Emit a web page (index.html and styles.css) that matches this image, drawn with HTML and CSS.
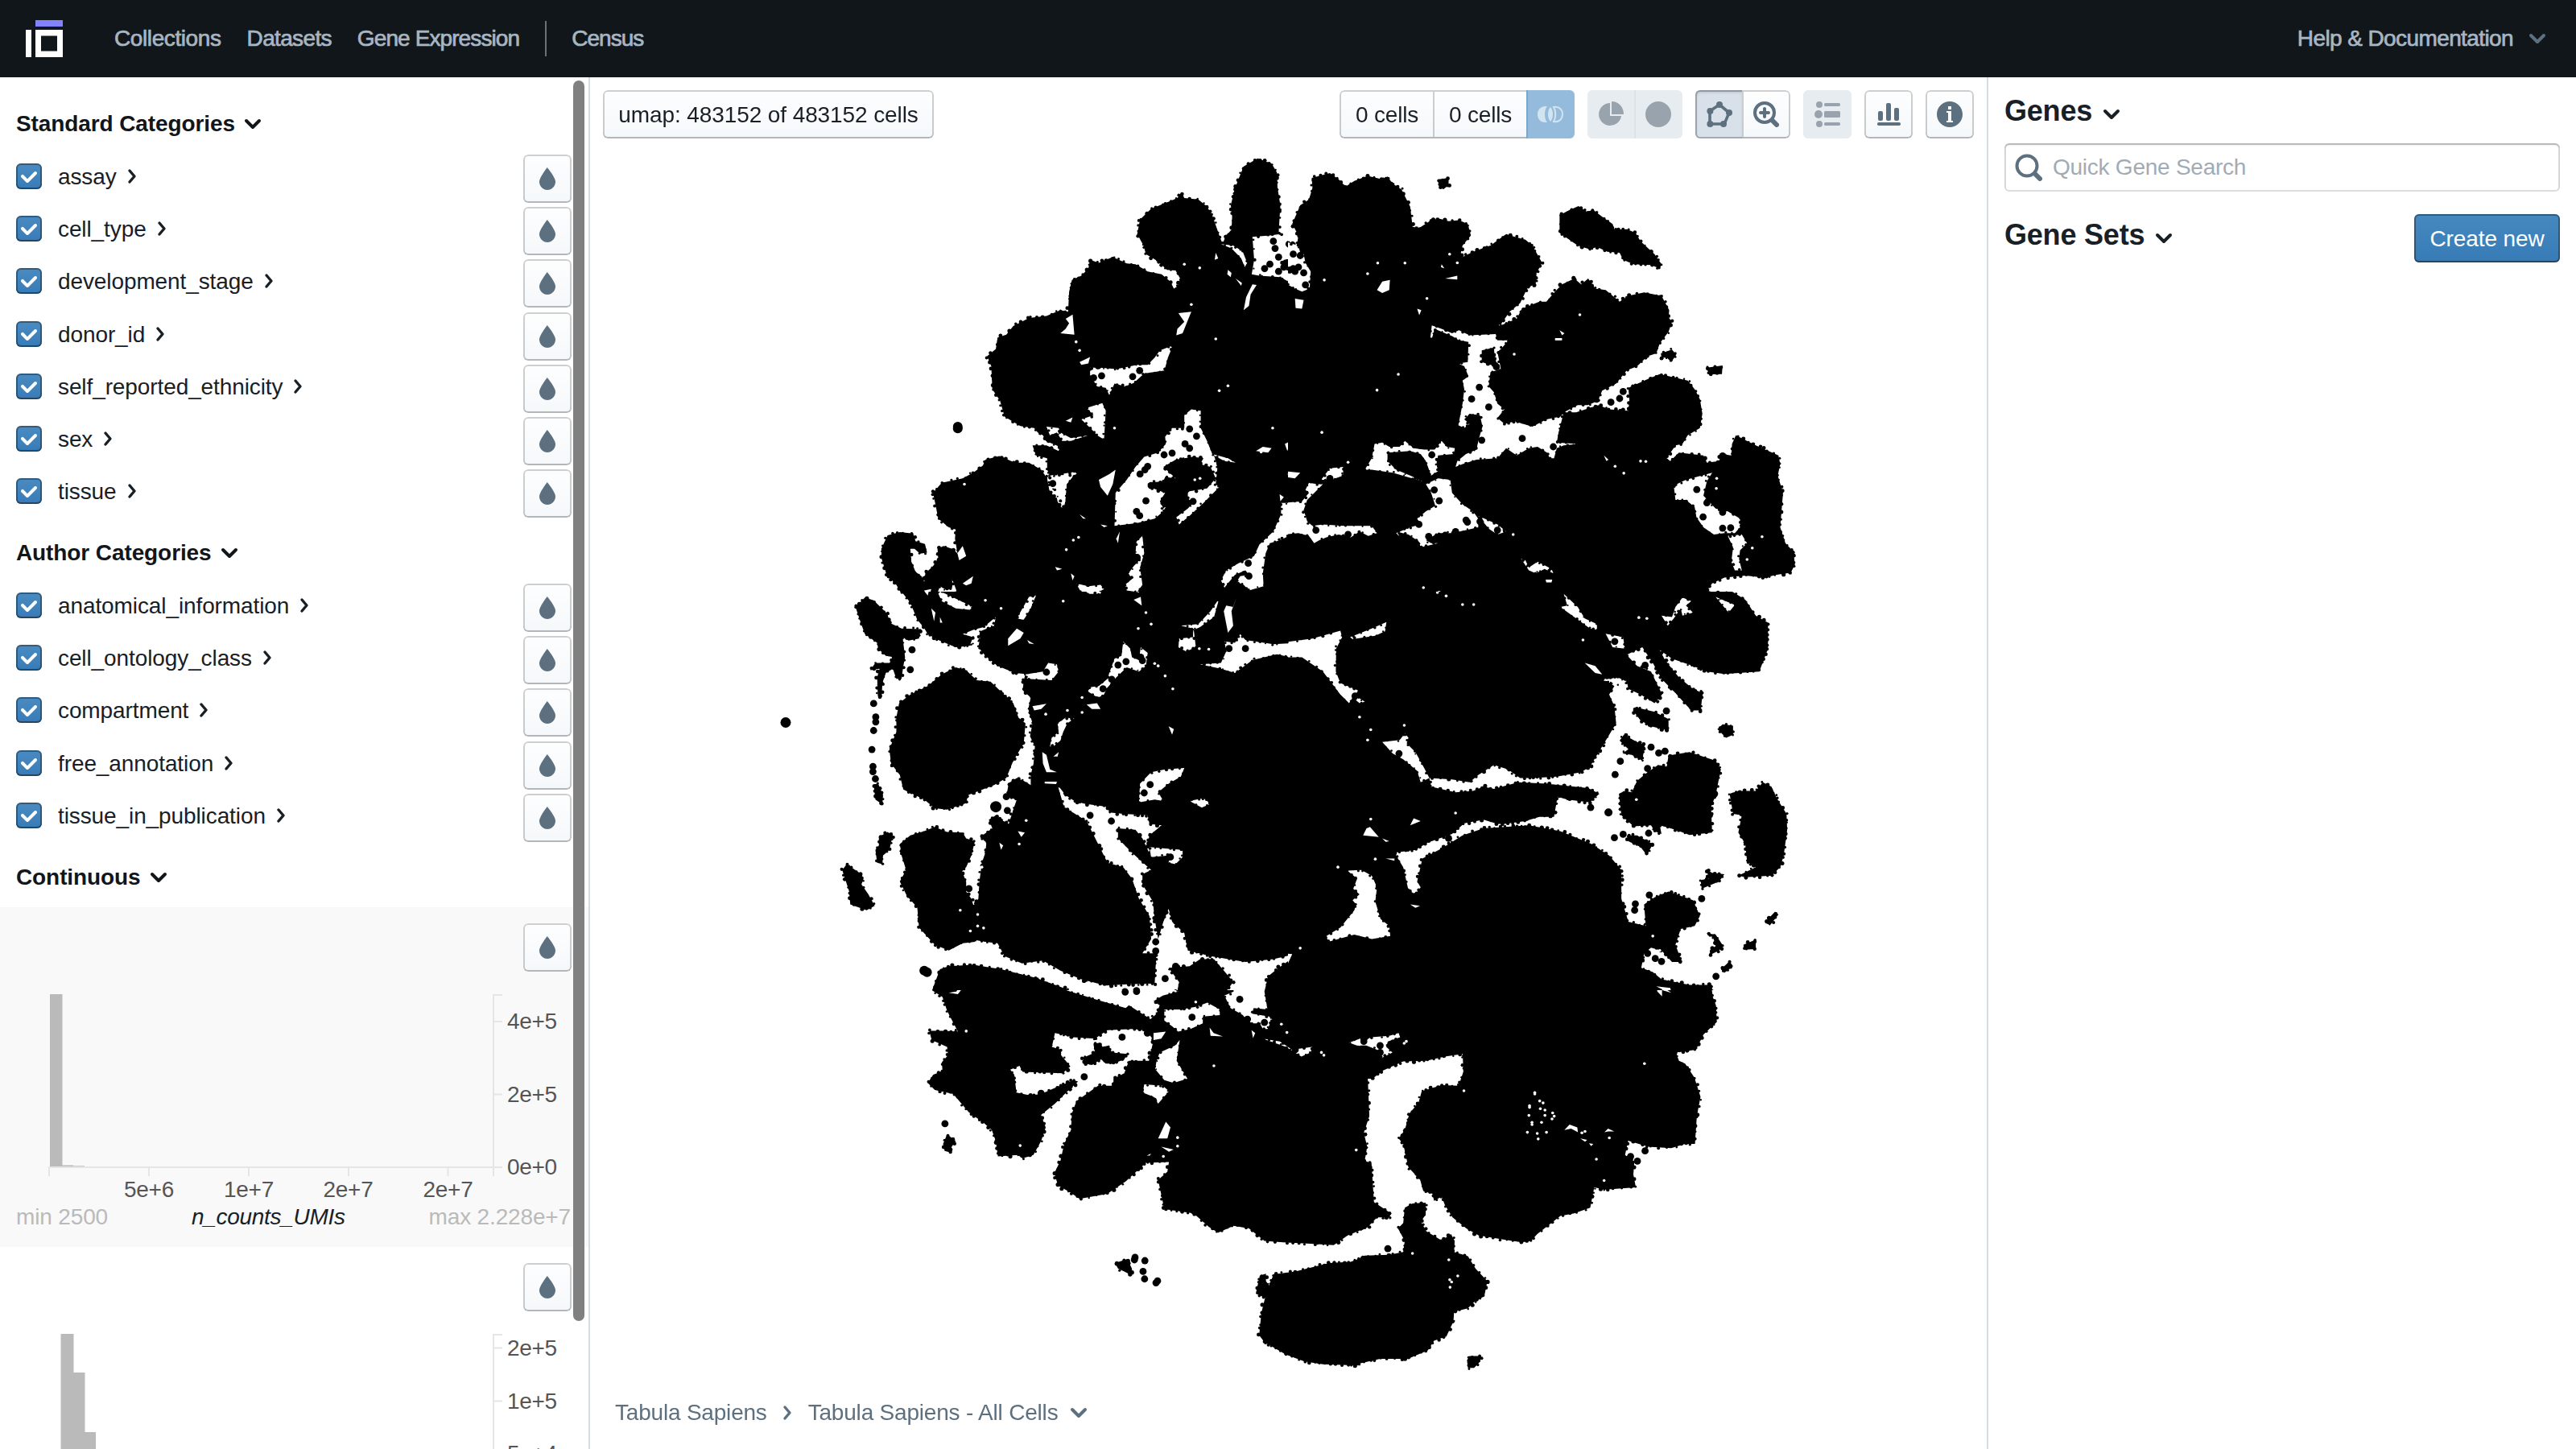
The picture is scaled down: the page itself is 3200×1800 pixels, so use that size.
FILE: index.html
```html
<!DOCTYPE html>
<html lang="en">
<head>
<meta charset="utf-8">
<title>Tabula Sapiens - All Cells</title>
<link rel="stylesheet" href="styles.css">
</head>
<body>
<svg class="defs" aria-hidden="true">
  <symbol id="tint" viewBox="0 0 16 16"><path d="M7.88 1s-4.9 6.28-4.9 8.9c.01 2.82 2.34 5.1 4.99 5.1 2.65-.01 5.03-2.3 5.03-5.13C12.99 7.17 7.88 1 7.88 1z"/></symbol>
  <symbol id="tick" viewBox="0 0 16 16"><path d="M12 5c-.28 0-.53.11-.71.29L7 9.59l-2.29-2.3a1.003 1.003 0 00-1.42 1.42l3 3c.18.18.43.29.71.29s.53-.11.71-.29l5-5A1.003 1.003 0 0012 5z"/></symbol>
  <symbol id="down" viewBox="0 0 22 14"><path d="M3 3l8 8 8-8" fill="none" stroke="currentColor" stroke-width="4" stroke-linecap="round" stroke-linejoin="round"/></symbol>
  <symbol id="right" viewBox="0 0 14 20"><path d="M4 3l6 7-6 7" fill="none" stroke="currentColor" stroke-width="3.4" stroke-linecap="round" stroke-linejoin="round"/></symbol>
</svg>

<header class="topbar">
  <svg class="logo" width="46" height="46" viewBox="0 0 46 46"><path fill="#8282ff" d="M12 0h34v8H12z"/><path fill="#fff" fill-rule="evenodd" d="M0 12h7v34H0zM12 12h34v34H12zM19 19.500v19h20v-19z"/></svg>
  <nav class="nav">
    <a class="collections">Collections</a><a class="datasets">Datasets</a><a class="expression">Gene Expression</a><span class="divider"></span><a class="census">Census</a>
  </nav>
  <div class="help">Help &amp; Documentation <svg width="22" height="14"><use href="#down"/></svg></div>
</header>

<div class="layout">
  <aside class="left">
    <div class="scroll">
      <h2 class="section">Standard Categories <svg width="22" height="14"><use href="#down"/></svg></h2>
      <div class="rows" data-names="assay cell_type development_stage donor_id self_reported_ethnicity sex tissue"></div>
      <h2 class="section">Author Categories <svg width="22" height="14"><use href="#down"/></svg></h2>
      <div class="rows" data-names="anatomical_information cell_ontology_class compartment free_annotation tissue_in_publication"></div>
      <h2 class="section last">Continuous <svg width="22" height="14"><use href="#down"/></svg></h2>

      <div class="hist shaded">
        <button class="btn icon"><svg width="32" height="32"><use href="#tint"/></svg></button>
        <svg class="plot" width="731" height="288" viewBox="0 0 731 288">
          <path class="bar" d="M62 242V28h15.500v212.500H91v.7h14v.8z"/>
          <path class="axis" d="M61 254V243H624M185 243v11M309 243v11M433 243v11M556.500 243v11M613 254V29h11M613 62h11M613 152.500h11"/>
          <g class="tick mid"><text x="185" y="280">5e+6</text><text x="309" y="280">1e+7</text><text x="432.500" y="280">2e+7</text><text x="556.500" y="280">2e+7</text></g>
          <g class="tick"><text x="630" y="71">4e+5</text><text x="630" y="161.500">2e+5</text><text x="630" y="252">0e+0</text></g>
        </svg>
        <div class="caption"><span>min 2500</span><em>n_counts_UMIs</em><span>max 2.228e+7</span></div>
      </div>

      <div class="hist">
        <button class="btn icon"><svg width="32" height="32"><use href="#tint"/></svg></button>
        <svg class="plot" width="731" height="288" viewBox="0 0 731 288">
          <path class="bar" d="M75.500 242V28H91.500v48H105.500v74H119v92z"/>
          <path class="axis" d="M61 254V243H624M613 254V29h11M613 45.500h11M613 111.500h11M613 177.500h11"/>
          <g class="tick"><text x="630" y="54.500">2e+5</text><text x="630" y="120.500">1e+5</text><text x="630" y="186">5e+4</text></g>
        </svg>
      </div>
    </div>
    <div class="thumb"></div>
  </aside>

  <main class="graph">
    <canvas id="embedding" class="embedding" width="1735" height="1704"></canvas>
    <div class="toolbar">
      <button class="btn layout-name">umap: 483152 of 483152 cells</button>
      <div class="tools">
        <div class="group">
          <button class="btn set">0 cells</button><button class="btn set">0 cells</button>
          <button class="btn icon compare"><svg width="32" height="32" viewBox="0 0 32 32"><path fill="#d3e4f1" d="M12 6C3 5 0 11 0 16s3 11 12 10C8 22 8 10 12 6z"/><path fill="#d3e4f1" d="M16 7c4 4 4 14 0 18-4-4-4-14 0-18z"/><path fill="none" stroke="#d3e4f1" stroke-width="2" d="M20 7c8-1 11 4 11 9s-3 10-11 9c3-5 3-13 0-18z"/></svg></button>
        </div>
        <div class="group">
          <button class="btn icon off"><svg width="32" height="32" viewBox="0 0 16 16"><path d="M7 1a7 7 0 1 0 7 8H7z"/><path d="M8 0v8h7.500C15.500 3.600 12.400 0 8 0z"/></svg></button>
          <button class="btn icon off split"><svg width="32" height="32" viewBox="0 0 16 16"><circle cx="8" cy="8" r="8"/></svg></button>
        </div>
        <div class="group">
          <button class="btn icon active"><svg width="32" height="32" viewBox="0 0 16 16"><path fill="none" stroke="currentColor" stroke-width="1.800" d="M8 2l6 5-3 7H2V6z"/><circle cx="8" cy="2" r="2"/><circle cx="14" cy="7" r="2"/><circle cx="10.500" cy="14" r="2"/><circle cx="2.200" cy="14" r="2"/><circle cx="2.200" cy="6" r="2"/></svg></button>
          <button class="btn icon"><svg width="32" height="32" viewBox="0 0 16 16"><circle cx="7" cy="7" r="6" fill="none" stroke="currentColor" stroke-width="2"/><path fill="none" stroke="currentColor" stroke-width="2" stroke-linecap="round" d="M7 4.500v5M4.500 7h5"/><path fill="none" stroke="currentColor" stroke-width="3" stroke-linecap="round" d="M12 12l2.500 2.500"/></svg></button>
        </div>
        <button class="btn icon off"><svg width="32" height="32" viewBox="0 0 16 16"><circle cx="3" cy="2" r="2"/><circle cx="2.500" cy="8" r="2.500"/><circle cx="3" cy="14" r="2"/><rect x="6" y="1" width="10" height="2" rx=".8"/><rect x="6" y="6" width="10" height="4" rx=".8"/><rect x="6" y="13" width="10" height="2" rx=".8"/></svg></button>
        <button class="btn icon"><svg width="32" height="32" viewBox="0 0 16 16"><rect x="1.500" y="6" width="3" height="6" rx="1"/><rect x="6.500" y="1" width="3" height="11" rx="1"/><rect x="11.500" y="4" width="3" height="8" rx="1"/><rect x="1" y="13" width="14.500" height="2" rx=".9"/></svg></button>
        <button class="btn icon"><svg width="32" height="32" viewBox="0 0 16 16"><path d="M8 0C3.580 0 0 3.580 0 8s3.580 8 8 8 8-3.580 8-8-3.580-8-8-8zM7 3h2v2H7V3zm3 10H6v-1h1V7H6V6h3v6h1v1z"/></svg></button>
      </div>
    </div>
    <div class="crumbs"><span>Tabula Sapiens</span><svg width="14" height="20" stroke-width="4"><use href="#right"/></svg><span>Tabula Sapiens - All Cells</span><svg width="22" height="14"><use href="#down"/></svg></div>
  </main>

  <aside class="genes">
    <h1>Genes <svg width="22" height="14"><use href="#down"/></svg></h1>
    <div class="search"><svg width="34" height="34" viewBox="0 0 34 34"><circle cx="15" cy="15" r="12.500" fill="none" stroke="#5c7080" stroke-width="4"/><path d="M25 25l6 6" stroke="#5c7080" stroke-width="6" stroke-linecap="round"/></svg><span>Quick Gene Search</span></div>
    <div class="sets"><h1>Gene Sets <svg width="22" height="14"><use href="#down"/></svg></h1><button class="btn primary">Create new</button></div>
  </aside>
</div>
<script src="app.js"></script>
</body>
</html>
```
FILE: styles.css
```css
* { box-sizing: border-box; }
body { margin: 0; width: 3200px; height: 1800px; overflow: hidden; background: #fff; color: #182026; font: 28px/36px "Liberation Sans", Arial, sans-serif; display: flex; flex-direction: column; }
svg { display: block; flex: none; fill: currentColor; }
.defs { position: absolute; width: 0; height: 0; }
h1, h2 { margin: 0; display: flex; align-items: center; }

.topbar { height: 96px; flex: none; background: #11161a; color: #a7b6c2; display: flex; align-items: center; padding: 0 37px 0 32px; }
.nav { display: flex; align-items: center; margin-left: 64px; }
.nav a, .help { -webkit-text-stroke: 0.7px #a7b6c2; white-space: nowrap; }
.nav a { margin-right: 32px; }
.nav .collections { letter-spacing: -0.4px; }
.nav .datasets { letter-spacing: -0.65px; }
.nav .expression { letter-spacing: -0.9px; }
.nav .census { letter-spacing: -0.95px; }
.nav .divider { width: 2px; height: 44px; background: #6b7178; margin-right: 31px; }
.help { margin-left: auto; display: flex; align-items: center; gap: 19px; letter-spacing: -0.6px; }
.help svg { color: #5c7080; }

.layout { flex: 1; min-height: 0; display: flex; }
.left { width: 733px; flex: none; border-right: 2px solid #d3dce3; position: relative; overflow: hidden; }
.scroll { padding-top: 19.500px; }
.section { height: 60px; margin: 8.400px 0 8.200px; padding: 1px 0 0 20px; font-size: 28px; line-height: 36px; letter-spacing: -0.1px; gap: 11px; color: #11161a; }
.section.last { margin-bottom: 7.400px; }
.row { height: 65.200px; display: flex; align-items: flex-start; padding: 0 21px 0 20px; }
.check { width: 32px; height: 32px; margin: 11px 20px 0 0; flex: none; border-radius: 6px; color: #fff; background: linear-gradient(#4a8bc1, #377bb7); box-shadow: inset 0 0 0 2px rgba(16,22,26,.4), inset 0 -2px 0 rgba(16,22,26,.2); }
.name { margin-top: 10px; letter-spacing: -0.1px; }
.row > svg { margin: 17px 0 0 12px; }
.row .btn { margin-left: auto; }

.btn { height: 60px; margin: 0; padding: 1px 20px 0; border: 0; border-radius: 6px; font: inherit; color: #182026; background: #f5f8fa linear-gradient(rgba(255,255,255,.85), rgba(255,255,255,0)); box-shadow: inset 0 0 0 2px rgba(16,22,26,.2), inset 0 -2px 0 rgba(16,22,26,.1); display: flex; align-items: center; justify-content: center; white-space: nowrap; }
.btn.icon { width: 60px; flex: none; padding: 0; color: #5c7080; }
.btn.layout-name { width: 411px; padding: 1px 0 0; letter-spacing: -0.1px; }

.hist { height: 422px; padding-top: 20px; display: flex; flex-direction: column; }
.hist .btn { align-self: flex-end; margin-right: 21px; }
.shaded { background: #f9f9f9; }
.bar { fill: #bababa; }
.axis { fill: none; stroke: #e5e5e5; stroke-width: 2; }
.tick { fill: #555; font-size: 28px; letter-spacing: -0.3px; }
.mid { text-anchor: middle; }
.caption { height: 34px; line-height: 34px; padding: 0 22px 0 20px; display: flex; justify-content: space-between; color: #bababa; letter-spacing: -0.15px; }
.caption em { color: #182026; letter-spacing: -0.3px; }
.thumb { position: absolute; left: 712px; top: 4px; width: 14px; height: 1541px; border-radius: 7px; background: #808080; }

.graph { flex: 1; position: relative; display: flex; flex-direction: column; justify-content: space-between; }
.embedding { position: absolute; inset: 0; }
.toolbar { position: relative; display: flex; justify-content: space-between; padding: 16px 16px 0; }
.tools { display: flex; gap: 16px; }
.group { display: flex; }
.group .btn:not(:first-child) { border-top-left-radius: 0; border-bottom-left-radius: 0; margin-left: -2px; }
.group .btn:not(:last-child) { border-top-right-radius: 0; border-bottom-right-radius: 0; }
.btn.set { width: 118px; padding: 1px 0 0; letter-spacing: -0.2px; }
.btn.compare { background: #94bbdc; box-shadow: inset 2px 0 0 #7aa8cc; }
.btn.off { background: #e6ecef; color: #98a3ae; box-shadow: none; }
.btn.split { box-shadow: inset 2px 0 0 #dce3e8; }
.btn.active { background: #d8e0e9; box-shadow: inset 0 0 0 2px rgba(16,22,26,.25), inset 0 2px 4px rgba(16,22,26,.2); }
.crumbs { position: relative; display: flex; align-items: center; padding: 0 0 27px 31px; color: #5c7080; letter-spacing: -0.2px; }
.crumbs svg:nth-child(2) { margin: 0 19px 0 18px; }
.crumbs svg:last-child { margin-left: 15px; }

.genes { width: 732px; flex: none; border-left: 2px solid #d3dce3; padding: 22px 20px; }
.genes h1 { font-size: 36px; line-height: 40px; height: 40px; gap: 13px; letter-spacing: -0.2px; }
.genes h1 svg { margin-top: 7px; }
.search { height: 60px; margin-top: 20px; padding-left: 13px; display: flex; align-items: center; gap: 13px; border-radius: 6px; color: #a1abb5; letter-spacing: -0.25px; background: #fff; box-shadow: inset 0 0 0 2px rgba(16,22,26,.15), inset 0 2px 2px rgba(16,22,26,.2); }
.sets { display: flex; justify-content: space-between; margin-top: 28px; }
.sets h1 { margin-top: 6px; }
.btn.primary { color: #fff; width: 181px; padding: 1px 0 0; letter-spacing: -0.1px; background: linear-gradient(#4689bf, #377bb7); box-shadow: inset 0 0 0 2px rgba(16,22,26,.4), inset 0 -2px 0 rgba(16,22,26,.2); }
```
FILE: app.js
```js
// Category rows
document.querySelectorAll('.rows').forEach(function (box) {
  box.innerHTML = box.dataset.names.split(' ').map(function (name) {
    return '<div class="row"><span class="check"><svg width="32" height="32"><use href="#tick"/></svg></span>' +
      '<span class="name">' + name + '</span><svg width="14" height="20"><use href="#right"/></svg>' +
      '<button class="btn icon"><svg width="32" height="32"><use href="#tint"/></svg></button></div>';
  }).join('');
});

// Embedding, stored as tiles. Each tile has an origin, a unit scale and a clip box in page
// pixels; "ink" are filled cell clusters, "gaps" are empty areas, "dots"/"holes" are x,y[,r] items.
var tiles = [
  { o: [940, 180], s: [2.306, 2.8], clip: [900, 150, 1600, 735],
    ink: [
      '418,1568 400,1530 372,1495 358,1440 357,1405 375,1358 410,1347 448,1352 455,1378 482,1388 488,1418 468,1422 452,1405 440,1405 443,1450 455,1485 472,1500 480,1520 483,1490 505,1465 520,1440 518,1405 535,1395 560,1405 575,1420 568,1370 570,1338 550,1330 520,1300 512,1250 505,1210 530,1175 590,1160 620,1140 648,1115 655,1095 695,1082 740,1105 780,1105 815,1130 832,1160 838,1200 862,1240 870,1260 880,1262 884,1240 888,1180 905,1155 925,1135 870,1145 840,1150 832,1130 832,1090 800,1080 790,1045 830,1045 865,1065 868,1050 828,1030 820,1010 805,1000 795,985 755,978 710,945 697,890 675,850 672,770 660,735 685,710 690,670 715,660 735,630 780,602 830,595 870,575 892,580 895,510 903,470 930,455 950,430 955,400 980,410 1020,390 1060,412 1085,415 1120,440 1160,450 1185,475 1195,500 1208,490 1213,465 1200,437 1175,435 1150,405 1115,380 1108,350 1090,310 1098,260 1130,222 1175,200 1205,185 1217,165 1225,185 1265,190 1290,215 1305,245 1318,290 1328,325 1335,345 1342,320 1360,295 1362,250 1358,210 1368,160 1378,125 1395,75 1435,47 1475,65 1490,95 1492,150 1500,210 1495,310 1520,325 1550,320 1545,290 1533,275 1548,230 1568,200 1568,1568'],
    gaps: [
      '1420,320 1470,315 1500,310 1545,310 1560,340 1568,360 1568,500 1545,490 1500,460 1440,455 1418,450 1425,400',
      '1330,345 1365,350 1392,370 1405,410 1398,425 1388,395 1360,360', '1350,435 1360,445 1358,460 1348,450', '1315,375 1322,395 1312,400', '1372,465 1390,480 1388,490',
      '1420,485 1432,487 1415,520 1410,560 1395,575 1402,530', '1545,535 1565,530 1568,570 1548,570',
      '870,655 885,640 895,620 885,605 905,590 910,660', '925,755 955,738 950,760 930,765',
      '955,775 985,775 1030,780 1090,765 1120,765 1140,740 1155,715 1192,698 1178,740 1168,785 1110,795 1080,828 1055,840 1025,830 1010,870 1000,845 975,840 955,800',
      '1208,585 1245,580 1230,625 1220,655 1202,662 1205,640 1225,615',
      '945,915 990,898 1000,925 995,1025 975,1010 960,990 930,955 965,940', '885,960 905,948 900,965', '830,980 865,985 870,1000 900,1020 950,1010 900,1030 875,1030 860,1000 840,1010',
      '1225,940 1245,920 1272,925 1272,985 1290,1030 1305,1075 1350,1090 1372,1105 1340,1100 1310,1080 1320,1120 1315,1180 1325,1190 1280,1245 1240,1290 1210,1320 1202,1295 1235,1265 1250,1245 1235,1230 1235,1200 1180,1240 1165,1275 1140,1300 1090,1315 1025,1325 1028,1210 1060,1165 1085,1120 1110,1085 1150,1070 1172,1040 1170,1015 1190,985 1225,985',
      '980,1165 1010,1145 1028,1130 1020,1180 1005,1220 985,1190', '840,1150 885,1148 905,1150 888,1180 884,1240 862,1240 855,1200 840,1190',
      '1088,1380 1105,1360 1110,1420 1098,1470 1105,1530 1090,1555 1060,1550 1055,1530 1075,1510 1065,1490 1080,1465 1100,1440 1085,1420',
      '1330,1515 1345,1480 1380,1455 1425,1430 1440,1390 1480,1345 1502,1285 1502,1245 1568,1245 1568,1355 1540,1350 1500,1375 1470,1385 1458,1420 1450,1490 1452,1535 1410,1550 1395,1530 1375,1520 1385,1500 1410,1495 1400,1480 1370,1495 1340,1540',
      '1430,1065 1450,1050 1475,1055 1465,1070', '1513,1040 1530,1030 1520,1065', '1520,1145 1540,1130 1555,1145 1540,1160', '1498,1215 1510,1225 1500,1240',
      '575,1420 590,1395 600,1430 580,1445', '590,1525 620,1500 615,1525 600,1532', '480,1550 500,1545 495,1568 485,1568', '515,1568 525,1535 545,1550 560,1540 560,1510 572,1550 570,1568',
      '915,1525 950,1535 985,1530 995,1545 960,1568 935,1568', '900,1490 910,1500 905,1515', '855,1468 875,1475 860,1480', '1030,1370 1040,1345 1035,1385', '925,1285 943,1300 935,1300', '985,1320 1005,1325 995,1330'],
    over: ['1165,1120 1200,1095 1250,1085 1280,1090 1270,1110 1300,1120 1315,1160 1290,1195 1240,1205 1215,1230 1190,1235 1165,1265 1155,1240 1170,1210 1125,1190 1125,1175 1165,1170 1170,1155 1200,1160', '1500,405 1530,395 1568,420 1568,450 1530,440'],
    dots: '1480,335 1485,360 1525,345 1540,370 1495,390 1470,415 1455,430 1495,440 1520,410 1540,425 1510,425 1555,395 1560,380 978,768 965,810 988,803 1077,806 1097,785 1240,988 1260,1013 1227,1040 1240,1055 1167,1078 1190,1072 1120,1118 1112,1130 1098,1145 1115,1238 1088,1275 1097,1290 1130,1185 1250,1240 1408,1455 1410,1500 576,986,6 576,980,6 1090,1435 848,1178',
    holes: '1255,1165 1270,1160 1478,985 1350,838 1325,855 1269,428 1225,415 1245,555 915,685 925,715 1025,985 1315,675 887,1408 907,1375 922,1365 1445,1068 595,1180' },

  { o: [1600, 180], s: [2.306, 2.8], clip: [1600, 150, 2300, 735],
    ink: [
      '-9,335 10,340 25,350 30,315 12,275 35,210 60,190 70,150 68,115 120,98 145,120 165,145 190,125 228,108 270,120 285,110 300,135 325,155 350,215 357,285 375,290 410,262 435,257 460,265 490,262 515,275 524,315 500,350 495,375 500,390 530,372 580,350 625,310 650,320 680,330 700,350 728,410 712,445 710,480 685,500 665,550 635,580 612,620 600,630 615,625 655,605 670,570 720,545 740,545 765,510 785,485 820,465 840,485 860,465 880,500 910,505 935,530 950,545 975,525 1020,513 1070,525 1092,575 1090,600 1100,615 1090,650 1065,690 1055,725 1030,735 1000,770 970,785 940,830 900,855 888,890 860,905 830,905 790,930 825,930 890,905 920,920 975,925 978,890 975,845 1030,815 1065,797 1110,810 1145,820 1165,850 1180,885 1187,935 1180,985 1145,1010 1130,1040 1110,1045 1085,1090 1095,1100 1120,1070 1190,1080 1200,1105 1235,1100 1240,1075 1270,1080 1272,1040 1283,1010 1340,1045 1405,1080 1410,1110 1403,1150 1418,1210 1410,1330 1425,1385 1448,1415 1452,1460 1440,1488 1400,1495 1365,1505 1310,1498 1250,1505 1215,1525 1200,1550 1230,1560 1270,1555 1285,1568 -9,1568',
      '432,120 460,115 460,140 445,155 430,140',
      '778,245 800,230 832,213 855,232 875,227 900,250 930,275 935,295 970,293 995,305 1010,335 1050,380 1070,415 1065,430 1040,418 990,415 960,400 950,375 915,372 885,355 865,363 830,350 800,325 778,305',
      '1068,725 1100,712 1112,730 1098,755 1085,740 1070,740', '1200,775 1245,767 1243,797 1205,798'],
    gaps: [
      '-9,335 15,345 30,350 35,375 45,380 50,410 65,440 62,500 40,510 20,500 -9,480', '20,535 45,540 40,570 22,568',
      '412,628 440,640 470,655 490,645 520,662 595,658 600,680 632,680 610,710 600,720 610,780 580,790 575,840 590,860 600,900 620,920 600,950 620,970 650,962 700,980 740,955 780,945 790,930 775,1000 770,1035 830,1040 790,1045 770,1055 762,1090 750,1090 742,1070 715,1050 690,1055 655,1080 625,1055 600,1090 540,1095 500,1110 480,1120 485,1100 510,1075 540,1060 545,1030 557,980 550,940 520,935 505,955 520,970 505,985 488,975 500,900 505,850 500,820 517,805 505,770 488,760 515,755 517,685 490,680 470,665 420,640 412,675 408,670',
      '248,1040 270,1035 290,1050 320,1050 335,1030 360,1055 390,1060 420,1060 440,1030 455,1050 478,1055 475,1075 430,1080 425,1110 430,1135 410,1150 395,1100 380,1075 350,1065 285,1070 285,1100 310,1130 350,1150 385,1170 370,1165 300,1140 240,1130 220,1130 240,1090',
      '-9,1245 40,1240 60,1210 50,1200 60,1175 85,1180 100,1180 80,1205 55,1235 45,1270 55,1310 70,1325 100,1320 160,1325 240,1325 255,1350 230,1360 205,1345 180,1365 145,1355 110,1365 90,1375 75,1385 60,1360 30,1350 -9,1355',
      '95,1165 120,1125 158,1120 158,1150 125,1165', '-9,1135 35,1140 20,1160 -9,1155',
      '395,1180 430,1160 465,1165 470,1210 500,1250 530,1275 545,1300 545,1330 510,1340 470,1350 430,1350 395,1375 410,1385 430,1385 380,1400 375,1380 345,1355 310,1345 325,1370 310,1350 350,1330 380,1320 370,1300 395,1275 422,1255 410,1210',
      '545,1290 600,1320 625,1345 600,1355 575,1335', '665,1435 680,1445 690,1470 715,1450 755,1475 760,1490 735,1475 710,1490 690,1480', '738,1512 757,1512 755,1522 740,1522',
      '1105,1185 1140,1165 1185,1150 1215,1140 1200,1170 1190,1220 1225,1265 1260,1275 1295,1300 1295,1330 1280,1350 1250,1350 1220,1355 1190,1330 1170,1295 1165,1260 1140,1235 1110,1235',
      '1260,1360 1300,1355 1315,1385 1295,1410 1292,1440 1300,1480 1280,1480 1270,1450 1275,1400',
      '255,505 270,475 292,470 290,505 270,515', '450,465 485,455 485,468', '370,570 382,575 376,592', '440,415 448,430 438,425', '765,672 785,672 785,680 765,680', '905,1080 918,1095 912,1100', '778,645 792,655 785,662'],
    over: ['555,715 590,705 592,740 600,765 580,765 555,755'],
    dots: '15,380 15,430 5,435 20,440 45,445 50,487 30,425 35,385 548,843 526,884 575,912 555,1027 671,1021 597,772 760,1050 925,895 960,858 950,882 419,1200 433,1238 514,1312 510,1305 375,1320 403,1362 450,1358 480,1345 120,1160 412,1078 1171,1199 1189,1294 1245,1278 1245,1333 1268,1332 1200,1245 1245,1082 550,1310 600,1340 172,1355 80,1340',
    holes: '257,411 228,448 104,470 335,411 485,410 398,534 463,380 836,591 648,728 255,853 316,798 97,1000 1010,1100 1025,1101 962,1142 937,1118 1228,1160 1227,1195 1330,1402 1315,1442 1358,1363 433,1556 388,1540 645,1355 172,1104' },

  { o: [940, 720], s: [2.306, 2.8], clip: [900, 735, 1600, 1230],
    ink: [
      '388,0 410,35 440,80 460,140 478,165 490,190 520,210 570,235 610,230 620,205 640,200 635,235 655,265 690,300 740,325 770,328 765,350 762,385 785,410 778,450 790,500 783,545 797,580 793,640 785,680 785,715 765,700 745,690 722,708 715,755 745,765 735,800 722,850 700,835 685,820 665,835 675,865 640,895 658,915 655,950 645,985 638,1050 635,1110 610,1165 610,1250 655,1260 690,1265 710,1310 760,1335 820,1325 870,1360 930,1390 1000,1412 1060,1408 1140,1405 1145,1300 1105,1300 1130,1250 1125,1170 1095,1110 1075,1040 1050,1000 1005,985 970,900 945,840 880,790 862,715 885,750 910,770 940,780 1005,790 1010,810 1050,815 1120,820 1125,850 1160,855 1125,890 1120,920 1130,965 1105,900 1085,870 1035,865 1035,900 1075,950 1130,1010 1105,1025 1105,1060 1135,1120 1140,1180 1150,1250 1165,1190 1180,1145 1190,1190 1225,1230 1235,1290 1300,1310 1400,1330 1480,1320 1535,1305 1530,1320 1490,1355 1465,1380 1455,1430 1470,1500 1500,1568 1568,1568 1568,0',
      '410,920 440,890 480,875 510,860 545,878 590,880 600,900 625,910 615,960 600,1000 588,1015 600,1050 600,1085 615,1110 625,1150 615,1180 625,1260 590,1265 550,1290 510,1270 465,1210 460,1140 430,1100 410,1050 428,1010 415,960',
      '1180,1350 1240,1345 1270,1320 1310,1320 1345,1370 1365,1400 1340,1440 1350,1568 1150,1568 1150,1460 1205,1430 1210,1400',
      '502,1430 525,1355 550,1345 620,1340 700,1355 800,1385 900,1430 1000,1470 1060,1480 1130,1530 1140,1568 570,1568 540,1500 530,1450',
      '283,95 310,62 335,72 375,120 380,150 415,170 470,172 465,205 435,212 418,200 425,270 420,300 415,345 400,345 390,310 370,325 360,360 358,410 347,405 345,340 352,310 325,315 340,290 380,290 395,270 370,265 348,240 345,220 310,190 298,150',
      '335,712 348,710 362,750 360,782 340,765', '350,895 375,878 390,890 380,940 362,960 360,990 345,985 340,940 350,925', '245,1010 258,990 300,1025 305,1045 300,1060 320,1095 338,1135 315,1150 268,1130 265,1085',
      '408,430 440,400 490,370 530,330 570,305 600,315 630,350 670,355 700,390 735,430 750,480 770,500 765,570 735,630 715,690 680,715 605,750 600,778 545,800 510,795 480,765 420,730 410,680 385,640 380,590 400,530 400,480'],
    gaps: [
      '1270,295 1330,290 1345,250 1340,215 1370,220 1385,190 1400,210 1480,225 1568,218 1568,280 1490,260 1420,280 1370,325 1330,310',
      '1095,775 1098,710 1130,670 1170,660 1225,655 1215,685 1180,710 1150,740 1165,770 1140,765', '1240,770 1280,760 1300,780 1275,793', '1180,510 1195,520 1190,540',
      '1125,930 1170,935 1220,940 1220,965 1200,990 1180,985 1180,960 1130,965',
      '920,10 955,30 990,20 985,50 950,50', '1060,0 1100,0 1095,45 1065,35', '1080,70 1100,60 1103,90',
      '1215,160 1265,155 1300,110 1325,65 1310,130 1270,165 1252,175 1258,235 1230,250 1208,235 1210,205 1250,200 1250,170', '1335,0 1370,0 1340,30', '1375,60 1360,110 1365,160 1350,185 1338,110 1345,90 1365,95', '1395,10 1450,0 1445,30 1410,35',
      '480,40 495,30 490,55', '515,35 560,60 620,95 610,105 570,100 530,75', '500,100 512,115 508,145', '525,130 532,150 525,150', '620,175 650,165 685,130 680,160 640,180 635,210 612,225 620,200 590,190', '780,60 800,55 785,100 765,140 745,135', '720,230 720,205 745,170 765,185 755,205', '775,210 795,225 780,222',
      '835,290 860,295 865,320 845,350 775,345 770,330 820,320', '790,440 830,432 815,450 795,455', '945,435 975,430 985,450 960,450',
      '950,375 980,370 1005,345 1010,325 1025,275 1045,265 1050,215 1070,240 1075,270 1095,280 1100,235 1120,255 1115,300 1095,320 1060,305 1030,340 1005,375 990,410 970,405 950,390',
      '840,580 845,550 865,530 862,500 885,480 910,483 890,500 878,530 870,560 850,580', '818,600 830,610 840,660 860,670 830,670 820,640', '850,615 865,600 862,615', '825,703 860,703 858,711 825,709',
      '748,875 768,880 758,895', '695,915 706,925 700,940'],
    over: [],
    dots: '685,790,7 718,803 715,755 445,244 440,313 335,431 341,478 341,495 335,525 330,591 333,650 333,668 340,693 955,820 1016,840 1185,965 608,1075 83,497,6.5 480,1360,6 488,1366,6 1143,1292 1170,1388 1055,1433 1088,1430 1085,1330 1143,1260 1353,240 1400,240 1127,713 1110,742 830,322 1035,297 1017,347 992,380 1058,285 1100,270 1105,282 1200,1345',
    holes: '932,410 932,462 890,455 828,468 1192,380 1170,335 1150,300 1140,292 1093,170 1130,155 1115,115 655,72 700,100 752,920 772,838 583,1150 633,1165 633,1205 650,1212 612,1222 645,1000 1268,240 1295,242 878,75' },

  { o: [1600, 720], s: [2.306, 2.8], clip: [1600, 735, 2300, 1230],
    ink: [
      '-9,0 1235,0 1210,15 1240,35 1270,40 1310,70 1340,125 1375,150 1375,240 1350,320 1250,328 1200,320 1160,300 1100,275 1065,245 1080,280 1120,340 1160,380 1188,395 1182,455 1155,455 1110,395 1070,345 1045,290 1015,235 970,262 1000,300 1040,320 1060,370 1072,400 1050,430 1010,400 975,380 970,350 940,345 905,345 935,370 920,400 935,440 940,500 915,550 890,600 865,650 840,670 770,685 700,690 665,690 630,660 590,645 545,680 520,705 470,695 405,690 410,720 480,740 530,735 560,720 590,728 660,705 740,710 860,725 892,745 865,775 800,765 772,755 762,825 720,825 680,840 620,850 600,850 560,835 505,848 470,885 400,915 365,940 305,950 330,1000 345,1080 365,1095 380,1070 370,1050 385,970 440,935 500,890 560,865 690,855 780,875 870,920 920,960 955,1010 955,1110 975,1190 1025,1205 1020,1130 1050,1105 1090,1085 1160,1115 1180,1170 1165,1205 1125,1215 1110,1270 1128,1330 1100,1330 1070,1290 1040,1280 1020,1300 1012,1350 1045,1365 1070,1390 1150,1410 1215,1410 1215,1450 1228,1500 1225,1568 -9,1568',
      '988,455 1000,445 1050,460 1090,485 1090,525 1040,510 1010,490', '950,560 962,540 1000,565 1022,575 1015,630 985,610 958,605 975,590',
      '948,745 965,735 985,740 1000,700 1025,675 1060,645 1085,650 1090,612 1150,600 1225,630 1240,660 1225,750 1212,790 1215,880 1150,888 1110,870 1065,855 1070,885 1050,875 1040,855 990,858 955,820',
      '970,890 1000,890 1045,920 1028,958 1010,930 975,910', '1230,520 1245,503 1275,508 1275,540 1255,550',
      '1265,745 1290,735 1340,735 1360,705 1385,720 1400,760 1428,815 1430,870 1420,960 1410,1000 1385,1030 1310,1035 1290,1030 1340,1000 1315,980 1310,920 1290,880 1300,820 1275,815',
      '1182,1045 1205,1040 1200,1010 1215,1020 1250,1025 1235,1050 1185,1075', '1368,1190 1395,1155 1405,1165 1380,1203', '1198,1230 1225,1235 1247,1275 1235,1290 1210,1305 1208,1290 1225,1275 1218,1245', '1305,1270 1340,1252 1340,1285 1305,1287', '1240,1355 1265,1328 1275,1345 1250,1368'],
    gaps: [
      '-9,218 70,205 150,178 155,200 138,240 137,320 150,360 200,385 195,405 220,425 205,430 185,410 175,430 150,400 100,320 40,270 -9,270', '178,200 240,170 282,148 278,180 250,195 185,207',
      '270,565 320,558 335,535 345,550 340,570 365,600 390,655 405,690 380,705 370,665 330,625 300,605', '225,865 235,860 260,895 215,890', '350,855 360,830 380,840', '270,900 290,910 280,912',
      '170,1012 210,1010 240,1030 255,1070 250,1120 265,1180 290,1205 293,1240 240,1250 190,1235 115,1260 110,1240 150,1210 190,1150 195,1130 185,1115 205,1095 187,1075 198,1040',
      '350,1130 378,1135 365,1142', '-9,1300 12,1303 0,1335', '280,970 305,970 305,978',
      '780,95 800,90 790,50 830,95 850,135 885,155 885,175 865,170 820,130', '910,188 960,200 965,240 930,235', '850,290 880,300 900,330 880,325', '895,350 945,340 970,355 960,365 935,365 925,355',
      '1070,125 1100,130 1110,95 1130,62 1155,75 1140,90 1160,115 1130,125 1125,100 1105,135 1088,160', '1225,60 1280,88 1262,115', '1055,1415 1095,1420 1100,1445 1085,1430 1070,1450 1072,1425'],
    over: [],
    dots: '1084,457 1040,583 1062,603 1080,597 952,632 937,678 1030,657 867,793 918,810,5 960,886 935,898 1033,882 1185,1110 995,1128 993,1150 1035,1097 1226,1380 1052,1318 1070,1328 1222,745 1023,298 1030,1300 192,405 318,605 936,215 460,900',
    holes: '428,45 453,57 500,87 532,87 388,28 205,478 228,558 237,522 998,765 237,833 250,972 143,1000 845,210 1045,1240 1065,1290 1005,132 1028,135 480,812 35,1282 333,507' },

  { o: [1100, 1180], s: [2.613, 2.904], clip: [1050, 1230, 1690, 1720],
    ink: [
      '150,145 185,170 200,220 235,295 190,292 142,292 150,325 200,350 203,380 183,405 185,438 155,450 137,480 160,505 220,520 270,585 320,625 345,650 358,690 365,745 430,740 445,752 480,740 505,690 520,640 505,595 550,555 600,500 625,475 610,470 545,500 505,520 470,525 425,515 418,450 405,432 435,418 445,440 575,445 600,420 570,380 570,360 540,350 550,300 610,315 680,320 720,290 800,285 845,290 870,325 855,400 790,400 775,445 740,465 740,490 690,490 620,545 605,590 602,650 580,700 568,760 548,805 560,850 600,875 630,898 720,880 780,835 845,768 920,765 915,800 885,830 905,935 1000,950 1050,1000 1080,1020 1130,995 1180,1005 1230,1050 1290,1055 1380,1060 1455,1065 1500,1030 1568,1000 1568,100 170,100',
      '187,700 200,665 228,690 215,710 210,730 192,725', '745,1130 785,1115 800,1150 800,1175 775,1160 755,1150',
      '1202,1240 1215,1175 1235,1168 1235,1195 1245,1210 1260,1170 1330,1160 1440,1130 1510,1125 1568,1100 1568,1500 1420,1495 1360,1485 1300,1460 1230,1415 1213,1390 1220,1310 1232,1255'],
    gaps: [
      '1100,165 1130,150 1130,120 1235,120 1230,150 1240,215 1195,210 1190,230 1245,240 1255,250 1240,285 1225,285 1215,265 1190,265 1170,250 1160,235 1120,210',
      '500,115 600,150 680,178 780,210 790,200 860,250 880,230 890,200 870,185 900,165 950,150 940,115',
      '905,215 960,215 1010,205 1045,190 1085,215 1085,235 1030,240 1030,265 990,285 950,295 930,275 905,255',
      '880,400 890,370 940,345 955,325 945,400 980,465 935,480 905,470 875,430', '840,485 900,490 920,510 885,555 870,530 835,515', '870,300 910,295 895,320 870,325', '1052,280 1065,300 1095,312 1055,310', '1188,290 1200,300 1193,318', '1225,320 1280,330 1320,360 1385,350 1380,370 1350,385 1300,350', '1505,335 1540,320 1578,330 1578,350 1530,345', '885,680 910,620 925,640 915,680', '895,710 935,720 920,728', '848,742 862,735 858,742', '205,155 230,150 245,125 252,135 235,160'],
    over: ['640,390 680,370 675,340 695,335 705,350 725,345 735,370 785,375 775,395 740,410 715,410 700,395 670,415 650,410'],
    dots: '193,627 645,458 768,315 505,517 850,300 815,150 778,152 1150,178 1175,250 1230,262 995,243 810,1109 808,1118 842,1121 836,1160 841,1187 878,1201 883,1194 870,545 1330,360',
    holes: '1066,418 1285,268 1303,298 1415,370 1423,380 948,677 948,708 902,745 1528,722 1007,188 262,293 437,706' },

  { o: [1680, 1180], s: [2.613, 2.904], clip: [1690, 1230, 2300, 1720],
    ink: [
      '-9,0 940,0 945,60 985,100 1060,118 1165,130 1170,170 1180,200 1183,260 1140,305 1115,360 1050,370 1060,400 1080,410 1110,460 1130,530 1118,600 1112,700 1080,700 1035,715 960,710 895,688 885,740 915,765 912,810 920,857 820,865 785,857 772,930 720,950 675,960 600,1025 580,1050 550,1055 490,1045 410,1030 370,1005 325,965 300,920 290,890 265,905 260,880 230,870 220,830 182,785 165,700 150,680 170,650 185,590 215,550 225,510 290,488 345,490 360,440 358,375 300,385 240,400 165,402 100,435 65,465 50,465 55,600 37,660 48,710 40,760 62,770 70,910 125,950 120,965 80,965 50,1000 0,1030 -9,1035',
      '170,930 195,915 238,912 238,955 222,980 240,1015 290,1048 320,1025 332,1050 330,1090 375,1105 400,1150 438,1195 428,1250 400,1265 375,1293 330,1305 328,1340 305,1395 265,1410 245,1445 180,1475 90,1475 -9,1500 -9,1120 40,1103 120,1100 165,1090 170,1050 148,1005 165,985',
      '372,1480 380,1465 418,1465 415,1485 395,1508 375,1508'],
    gaps: ['-9,330 45,325 60,315 120,310 150,300 155,315 115,330 110,350 130,370 95,390 80,360 45,345 -9,345', '688,650 705,630 730,640 732,658 710,645', '740,680 762,685 755,692', '768,698 782,700 775,708', '818,658 830,645 850,655 830,655', '985,130 1010,135 1035,155 1005,145 1005,168 990,150'],
    over: [],
    dots: '90,345 90,370 37,330 115,1078 950,725 925,762 903,745',
    holes: '592,520 575,562 575,568 608,545 610,573 619,552 625,578 625,597 583,622 583,630 614,622 568,658 600,662 603,682 630,658 573,597 650,588 655,600 648,610 592,515 755,655 745,660 948,410 362,508 817,832 834,678 313,1118 316,1190 322,1198 342,1176 317,1217 195,1095 175,330 168,337 792,755' }
];

var canvas = document.getElementById('embedding');
var ctx = canvas.getContext('2d');
var originX = 733, originY = 96;
var seed = 7;
function rand() { seed = (seed * 16807) % 2147483647; return seed / 2147483647; }
function disc(x, y, r) { ctx.beginPath(); ctx.arc(x, y, r, 0, Math.PI * 2); ctx.fill(); }

function points(text, t) {
  return text.trim().split(/\s+/).map(function (pair) {
    var n = pair.split(',').map(Number);
    return [t.o[0] + n[0] / t.s[0], t.o[1] + n[1] / t.s[1], n[2]];
  });
}
// Fill a polygon, then stamp small discs along its border for the ragged outline
function shape(pts, color, r, step, jitter) {
  ctx.fillStyle = color;
  ctx.beginPath();
  pts.forEach(function (p) { ctx.lineTo(p[0], p[1]); });
  ctx.fill();
  if (!r) return;
  ctx.fillStyle = '#000';
  pts.forEach(function (a, i) {
    var b = pts[(i + 1) % pts.length];
    var d = Math.hypot(b[0] - a[0], b[1] - a[1]);
    for (var k = step * rand(); k < d; k += step * (.6 + rand())) {
      disc(a[0] + (b[0] - a[0]) * k / d + (rand() - .5) * jitter, a[1] + (b[1] - a[1]) * k / d + (rand() - .5) * jitter, r * (.6 + .7 * rand()));
    }
  });
}
ctx.translate(-originX, -originY);
tiles.forEach(function (t) {
  ctx.save();
  ctx.beginPath();
  ctx.rect(t.clip[0], t.clip[1], t.clip[2] - t.clip[0], t.clip[3] - t.clip[1]);
  ctx.clip();
  t.ink.forEach(function (p) { shape(points(p, t), '#000', 2, 7, 2.4); });
  t.gaps.forEach(function (p) {
    var pts = points(p, t);
    var xs = pts.map(function (q) { return q[0]; });
    var wide = Math.max.apply(null, xs) - Math.min.apply(null, xs) > 22;
    shape(pts, '#fff', wide ? 1.6 : 0, 8, 2.4);
  });
  t.over.forEach(function (p) { shape(points(p, t), '#000', 2, 7, 2.4); });
  ctx.fillStyle = '#000';
  points(t.dots, t).forEach(function (p) { disc(p[0], p[1], p[2] || 4.4); });
  ctx.fillStyle = '#fff';
  points(t.holes, t).forEach(function (p) { disc(p[0], p[1], 1.8); });
  ctx.restore();
});
```
